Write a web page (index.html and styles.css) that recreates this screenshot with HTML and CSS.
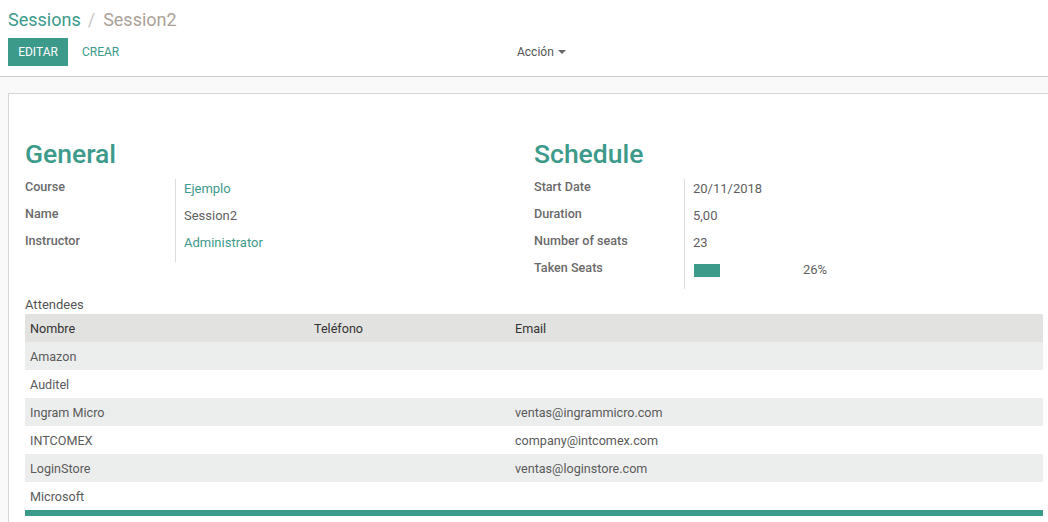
FILE: index.html
```html
<!DOCTYPE html>
<html lang="es">
<head>
<meta charset="utf-8">
<title>Session2</title>
<link rel="stylesheet" href="styles.css">
</head>
<body>
<div class="control-panel">
  <div class="breadcrumb"><a class="crumb-link">Sessions</a><span class="sep">/</span><span class="crumb-active">Session2</span></div>
  <div class="cp-row">
    <div class="buttons">
      <button class="btn-primary">EDITAR</button>
      <button class="btn-link">CREAR</button>
    </div>
    <div class="sidebar-action">Acción <span class="caret"></span></div>
  </div>
</div>
<div class="content">
  <div class="sheet">
    <div class="groups">
      <div class="group">
        <h2 class="group-title">General</h2>
        <div class="fields">
          <div class="labels">
            <div class="label">Course</div>
            <div class="label">Name</div>
            <div class="label">Instructor</div>
          </div>
          <div class="values">
            <div class="value link">Ejemplo</div>
            <div class="value">Session2</div>
            <div class="value link">Administrator</div>
          </div>
        </div>
      </div>
      <div class="group">
        <h2 class="group-title">Schedule</h2>
        <div class="fields">
          <div class="labels">
            <div class="label">Start Date</div>
            <div class="label">Duration</div>
            <div class="label">Number of seats</div>
            <div class="label">Taken Seats</div>
          </div>
          <div class="values">
            <div class="value">20/11/2018</div>
            <div class="value">5,00</div>
            <div class="value">23</div>
            <div class="value progress-row">
              <div class="progress"><div class="progress-bar" style="width:26%"></div></div>
              <span class="progress-text">26%</span>
            </div>
          </div>
        </div>
      </div>
    </div>
    <div class="attendees-label">Attendees</div>
    <table class="list">
      <thead>
        <tr><th class="c1">Nombre</th><th class="c2">Teléfono</th><th>Email</th></tr>
      </thead>
      <tbody>
        <tr><td>Amazon</td><td></td><td></td></tr>
        <tr><td>Auditel</td><td></td><td></td></tr>
        <tr><td>Ingram Micro</td><td></td><td>ventas@ingrammicro.com</td></tr>
        <tr><td>INTCOMEX</td><td></td><td>company@intcomex.com</td></tr>
        <tr><td>LoginStore</td><td></td><td>ventas@loginstore.com</td></tr>
        <tr><td>Microsoft</td><td></td><td></td></tr>
      </tbody>
    </table>
    <div class="list-footer"></div>
  </div>
</div>
</body>
</html>
```
FILE: styles.css
```css
html, body {
  margin: 0;
  padding: 0;
  height: 100%;
  overflow: hidden;
}
body {
  font-family: Roboto, "Noto Sans", sans-serif;
  font-size: 13px;
  color: #666666;
  background: #f9f9f9;
}
.control-panel {
  background: #ffffff;
  border-bottom: 1px solid #cccccc;
  padding: 0 8px 10px 8px;
}
.breadcrumb {
  font-size: 18px;
  height: 38px;
  line-height: 40px;
}
.crumb-link { color: #3c9a8b; }
.sep { color: #c8c8c8; margin: 0 8px 0 7px; }
.crumb-active { color: #aaa299; }
.cp-row {
  display: flex;
  align-items: center;
  height: 28px;
}
.buttons { display: flex; align-items: center; width: 509px; }
.btn-primary, .btn-link {
  font-family: Roboto, sans-serif;
  font-size: 12px;
  border: none;
  height: 28px;
  padding: 0;
  cursor: pointer;
}
.btn-primary {
  background: #3c9a8b;
  color: #ffffff;
  width: 60px;
}
.btn-link {
  background: transparent;
  color: #3c9a8b;
  margin-left: 14px;
}
.sidebar-action {
  color: #555555;
  font-size: 12px;
  display: flex;
  align-items: center;
}
.caret {
  display: inline-block;
  margin-left: 4px;
  border-left: 4px solid transparent;
  border-right: 4px solid transparent;
  border-top: 4px solid #666;
}
.content {
  padding: 16px 0 0 8px;
}
.sheet {
  background: #ffffff;
  border: 1px solid #d6d6d6;
  border-right: none;
  padding: 43px 5px 40px 16px;
  min-height: 440px;
}
.groups {
  display: flex;
}
.group {
  width: 509px;
}
.group-title {
  font-size: 26.5px;
  font-weight: 500;
  color: #3c9a8b;
  margin: 0 0 8px 0;
  line-height: 34px;
}
.fields {
  display: flex;
}
.labels {
  width: 150px;
}
.label {
  height: 27px;
  line-height: 15px;
  font-size: 12.6px;
  font-weight: 500;
  color: #6a6a6a;
}
.values {
  border-left: 1px solid #dddddd;
  padding: 2px 0 0 8px;
  flex: 1;
}
.value {
  height: 27px;
  line-height: 15px;
  color: #5f5f5f;
}
.link { color: #3c9a8b; }
.progress-row {
  display: flex;
  align-items: flex-start;
}
.progress {
  width: 100px;
  height: 13px;
  margin: 2px 0 0 1px;
}
.progress-bar {
  height: 13px;
  background: #3c9a8b;
}
.progress-text {
  margin-left: 9px;
  line-height: 16px;
}
.attendees-label {
  margin-top: 8px;
  height: 17px;
  line-height: 16px;
  font-size: 13px;
  color: #555;
}
.list {
  width: 100%;
  border-collapse: collapse;
  font-size: 12.6px;
}
.list th, .list td {
  height: 28px;
  padding: 0 5px;
  text-align: left;
  color: #5a5a5a;
}
.list th {
  background: #e2e2e0;
  font-weight: normal;
  color: #333;
}
.c1 { width: 274px; }
.c2 { width: 191px; }
.list tbody tr:nth-child(odd) td { background: #eceeed; }
.list-footer {
  height: 6px;
  background: #3c9a8b;
}
```
